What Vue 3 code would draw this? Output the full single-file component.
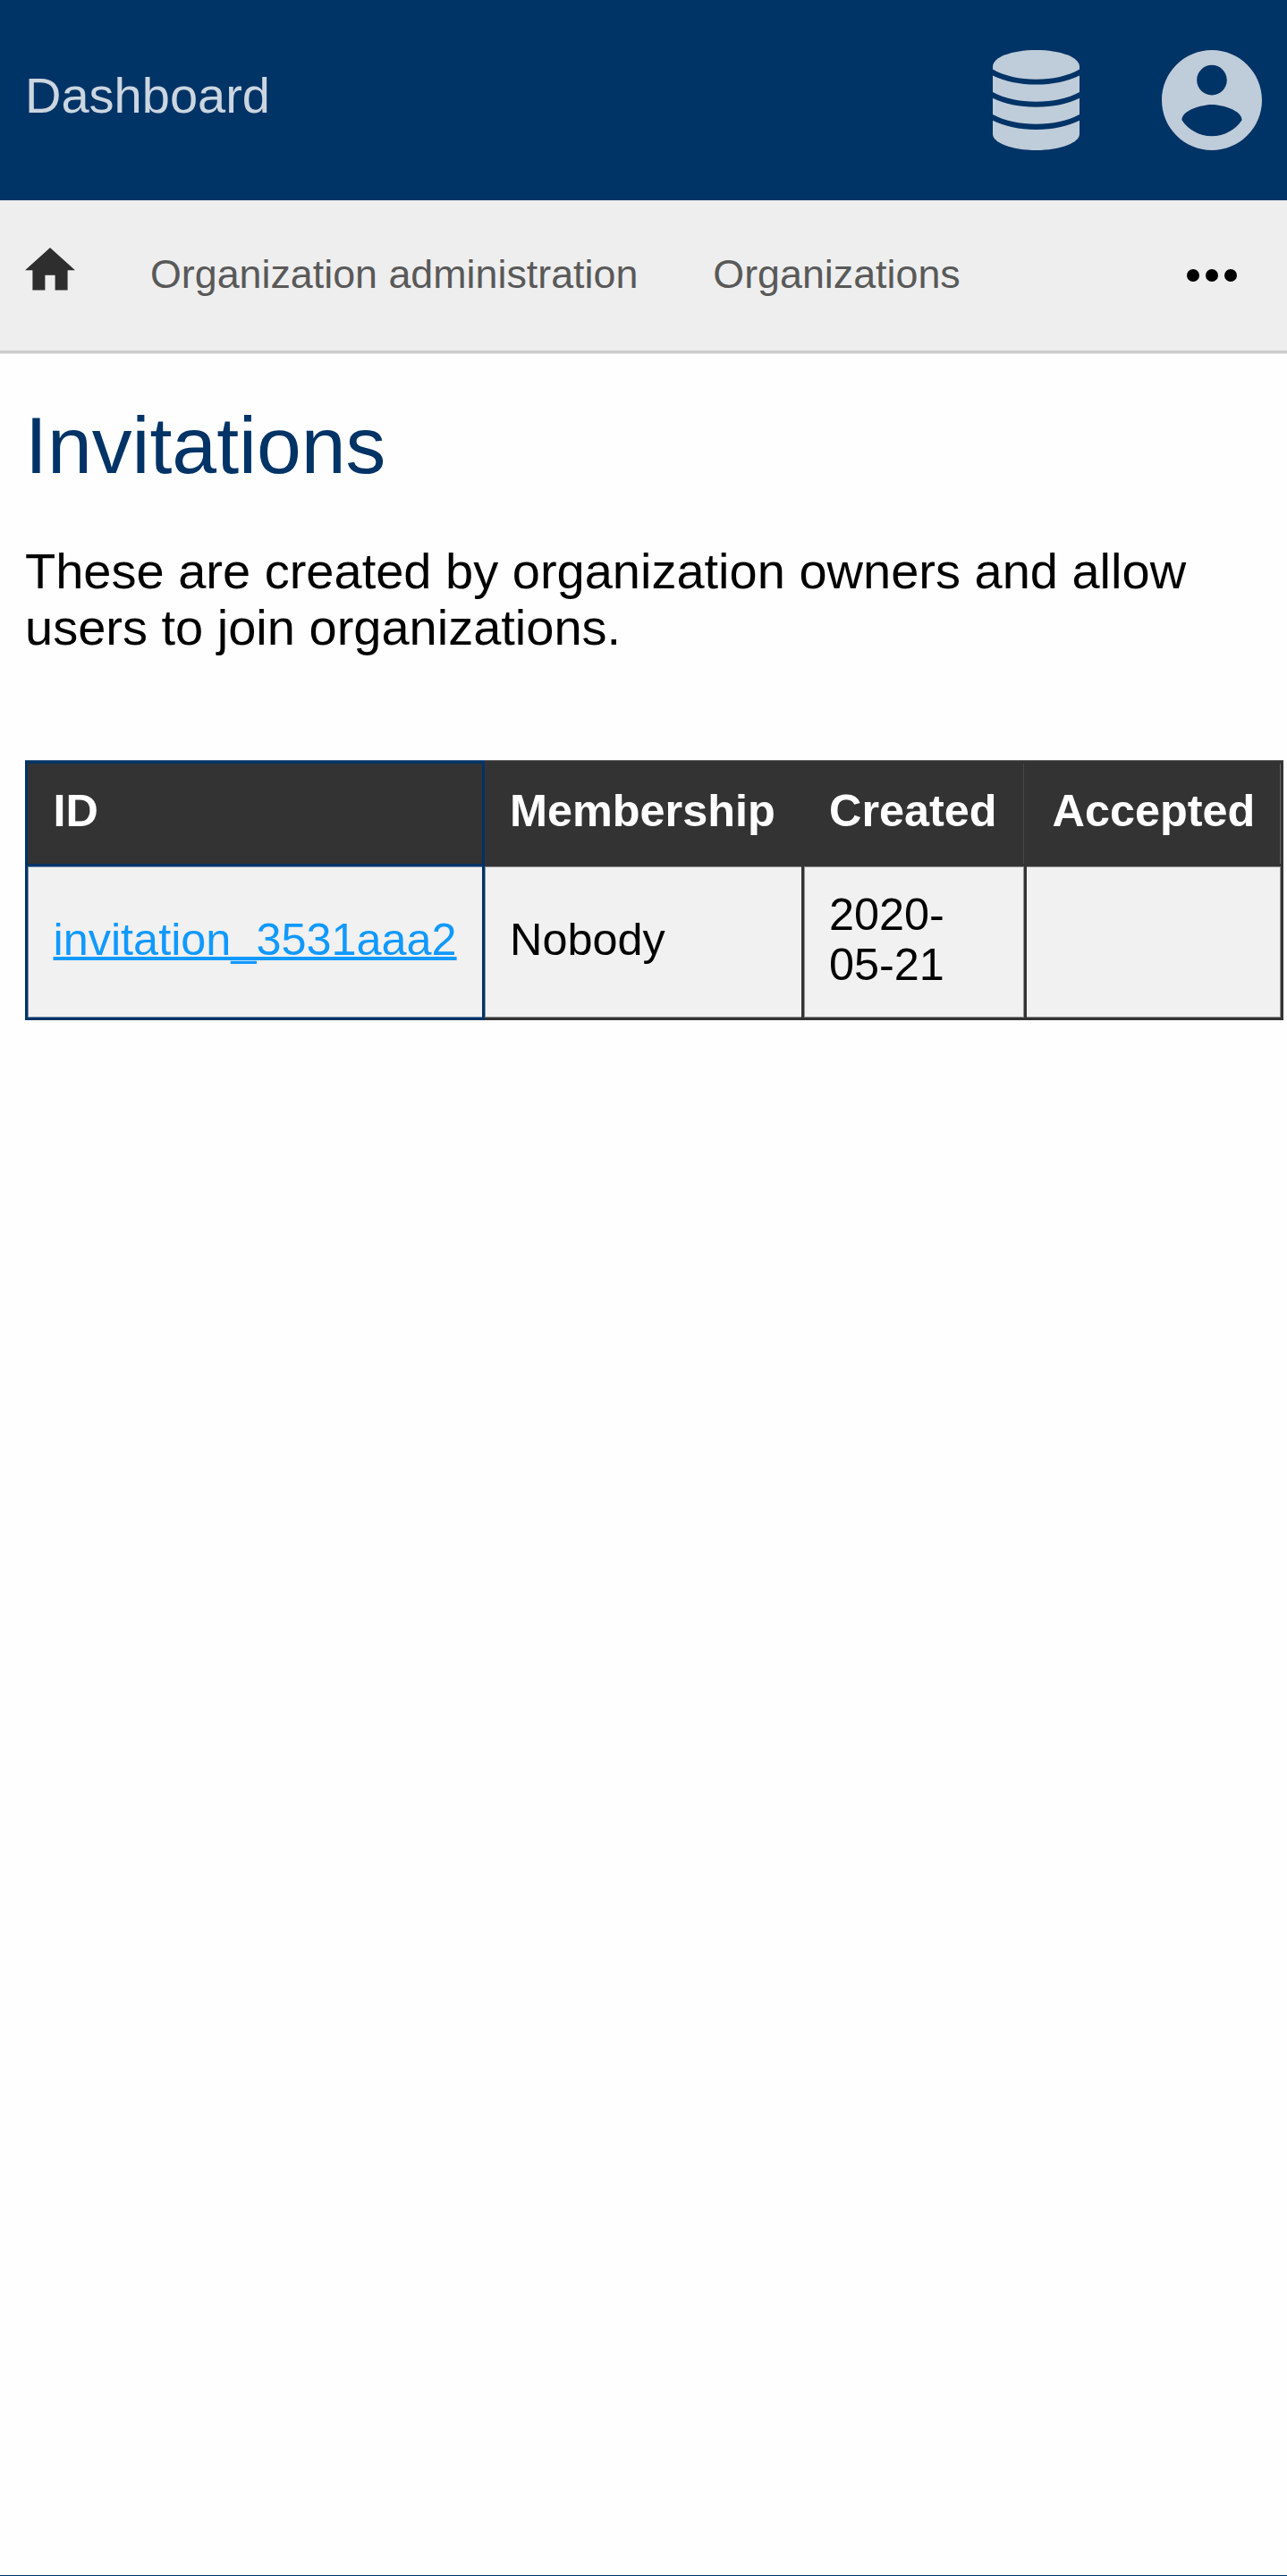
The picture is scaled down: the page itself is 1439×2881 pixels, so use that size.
<script setup>
const links = ['Organization administration', 'Organizations']
const columns = ['ID', 'Membership', 'Created', 'Accepted']
const rows = [
  { id: 'invitation_3531aaa2', membership: 'Nobody', created: '2020-05-21', accepted: '' }
]
</script>

<template>
  <div class="page">
    <header class="header">
      <a class="title">Dashboard</a>
      <div class="actions">
        <svg class="db" viewBox="0 0 97 112" aria-hidden="true">
          <path d="M0 18.5C0 8 21 0 48.5 0S97 8 97 18.5V21.5C84 29 67 32.8 48.5 32.8S13 29 0 21.5Z" />
          <path d="M0 28.5C13 35 30 38.6 48.5 38.6S84 35 97 28.5V47C84 54 67 57.8 48.5 57.8S13 54 0 47Z" />
          <path d="M0 53.8C13 60.2 30 63.8 48.5 63.8S84 60.2 97 53.8V72C84 79 67 82.8 48.5 82.8S13 79 0 72Z" />
          <path d="M0 78.8C13 85.3 30 89 48.5 89S84 85.3 97 78.8V94C97 103.5 76 112 48.5 112S0 103.5 0 94Z" />
        </svg>
        <svg class="user" viewBox="2 2 20 20" aria-hidden="true">
          <path d="M12 2C6.48 2 2 6.48 2 12s4.48 10 10 10 10-4.48 10-10S17.52 2 12 2zm0 3c1.66 0 3 1.34 3 3s-1.34 3-3 3-3-1.34-3-3 1.34-3 3-3zm0 14.2c-2.5 0-4.71-1.28-6-3.22.03-1.99 4-3.08 6-3.08 1.99 0 5.97 1.09 6 3.08-1.29 1.94-3.5 3.22-6 3.22z" />
        </svg>
      </div>
    </header>
    <nav class="nav">
      <svg class="home" viewBox="2 3 20 17" aria-hidden="true">
        <path d="M10 20v-6h4v6h5v-8h3L12 3 2 12h3v8z" />
      </svg>
      <a v-for="link in links" :key="link" class="link">{{ link }}</a>
      <svg class="more" viewBox="0 0 56 14" aria-hidden="true">
        <circle cx="7" cy="7" r="7" />
        <circle cx="28" cy="7" r="7" />
        <circle cx="49" cy="7" r="7" />
      </svg>
    </nav>
    <main class="content">
      <h1>Invitations</h1>
      <p>These are created by organization owners and allow users to join organizations.</p>
      <table>
        <thead>
          <tr><th v-for="c in columns" :key="c">{{ c }}</th></tr>
        </thead>
        <tbody>
          <tr v-for="row in rows" :key="row.id">
            <td><a class="id-link">{{ row.id }}</a></td>
            <td>{{ row.membership }}</td>
            <td>{{ row.created }}</td>
            <td>{{ row.accepted }}</td>
          </tr>
        </tbody>
      </table>
    </main>
    <footer class="footer"></footer>
  </div>
</template>

<style>
body {
  margin: 0;
  background: #fefefe;
}
</style>

<style scoped>
.page {
  display: flex;
  flex-direction: column;
  width: 1439px;
  height: 2881px;
  overflow: hidden;
  font-family: "Liberation Sans", Arial, sans-serif;
  font-size: 56px;
  line-height: 63px;
  color: #000;
}
.header {
  box-sizing: border-box;
  flex: none;
  display: flex;
  justify-content: space-between;
  align-items: center;
  height: 224px;
  padding: 0 28px;
  background: #003366;
}
.title {
  color: #ccd6e0;
  padding-bottom: 11px;
}
.actions {
  display: flex;
  gap: 92px;
  fill: #bfccd9;
}
.db {
  width: 97px;
  height: 112px;
}
.user {
  width: 112px;
  height: 112px;
}
.nav {
  box-sizing: border-box;
  flex: none;
  display: flex;
  align-items: center;
  gap: 84px;
  height: 171px;
  margin-bottom: 1px;
  padding: 0 56px 0 28px;
  background: #eee;
  border-bottom: 3px solid #ccc;
  box-shadow: 0 1px #e6e6e6;
}
.home {
  width: 56px;
  height: 47.6px;
  margin-bottom: 14px;
  fill: #2e2e2e;
}
.link {
  margin-bottom: 4px;
  font-size: 44.8px;
  line-height: 52px;
  color: #595959;
}
.more {
  width: 56px;
  height: 14px;
  margin-left: auto;
}
.content {
  flex: 1;
  padding: 0 0 0 28px;
}
h1 {
  margin: 51px 0 0;
  font-size: 89.6px;
  line-height: 102px;
  font-weight: 400;
  color: #003366;
}
p {
  width: 1383px;
  margin: 58px 0 118px;
}
table {
  table-layout: fixed;
  width: 1407px;
  border-collapse: separate;
  border-spacing: 0;
  font-size: 50.4px;
  line-height: 56px;
}
th,
td {
  box-sizing: border-box;
  border: 0 solid #333;
  border-width: 0 3px 3px 0;
  text-align: left;
  vertical-align: middle;
}
th {
  width: 249px;
  height: 118px;
  padding: 0 0 7px 28px;
  border-top-width: 3px;
  background: #333;
  color: #fff;
  font-weight: 700;
  box-shadow: 0 -1px #666;
}
td {
  height: 172px;
  padding: 0 28px 6px;
  background: #f1f1f1;
  box-shadow: inset 1px 1px #929292, inset 0 -1px #929292;
}
th:first-child,
td:first-child {
  padding-left: 28.5px;
  border-left-width: 3px;
  border-color: #003366;
}
th:first-child {
  width: 514px;
  box-shadow: 0 -1px #40668c;
}
td:first-child {
  padding-right: 0;
  box-shadow: inset 1px 1px #7992ac, inset 0 -1px #7992ac;
}
th:nth-child(2) {
  width: 357px;
}
td:nth-child(2) {
  box-shadow: inset 1px 0 #7992ac, inset 0 1px #929292, inset 0 -1px #929292;
}
th:nth-child(3) {
  box-shadow: 0 -1px #666, inset -1px 0 #484848;
}
td:nth-child(3) {
  box-shadow: inset 1px 1px #929292, inset -1px -1px #929292;
}
th:nth-child(4) {
  width: 287px;
  padding-left: 28.5px;
  box-shadow: 0 -1px #666, inset -1px 0 #666;
}
td:nth-child(4) {
  box-shadow: inset 0 1px #929292, inset -1px -1px #929292;
}
.id-link {
  color: #1199ff;
  text-decoration: underline;
  text-decoration-thickness: 3.5px;
  text-decoration-skip-ink: none;
}
.footer {
  flex: none;
  height: 1px;
  background: #003366;
}
</style>
